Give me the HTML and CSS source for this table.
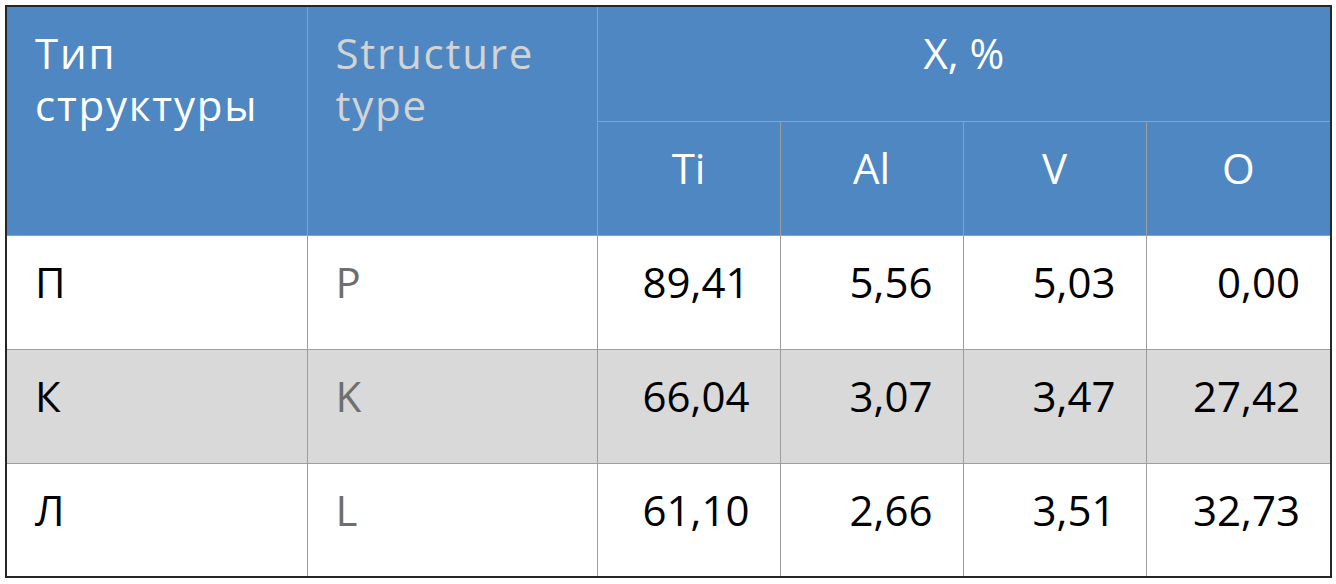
FILE: index.html
```html
<!DOCTYPE html>
<html lang="ru">
<head>
<meta charset="utf-8">
<title>Тип структуры</title>
<link rel="stylesheet" href="styles.css">
</head>
<body>
<table class="data">
  <colgroup>
    <col class="c-ru"><col class="c-en"><col class="c-num"><col class="c-num"><col class="c-num"><col class="c-last">
  </colgroup>
  <thead>
    <tr class="h1">
      <th rowspan="2" class="lbl">Тип<br>структуры</th>
      <th rowspan="2" class="lbl en">Structure<br>type</th>
      <th colspan="4" class="mid">X, %</th>
    </tr>
    <tr class="h2">
      <th class="mid">Ti</th>
      <th class="mid">Al</th>
      <th class="mid">V</th>
      <th class="mid">O</th>
    </tr>
  </thead>
  <tbody>
    <tr>
      <td class="lbl">П</td><td class="lbl en">P</td>
      <td class="num">89,41</td><td class="num">5,56</td><td class="num">5,03</td><td class="num">0,00</td>
    </tr>
    <tr class="alt">
      <td class="lbl">К</td><td class="lbl en">K</td>
      <td class="num">66,04</td><td class="num">3,07</td><td class="num">3,47</td><td class="num">27,42</td>
    </tr>
    <tr>
      <td class="lbl">Л</td><td class="lbl en">L</td>
      <td class="num">61,10</td><td class="num">2,66</td><td class="num">3,51</td><td class="num">32,73</td>
    </tr>
  </tbody>
</table>
</body>
</html>
```
FILE: styles.css
```css
html, body {
  margin: 0;
  padding: 0;
  background: #ffffff;
}

body {
  padding: 5px 0 0 5px;
  font-family: "Open Sans", "Noto Sans", sans-serif;
}

.data {
  border-collapse: collapse;
  table-layout: fixed;
  width: 1325px;
  border: 2px solid #262626;
  font-size: 42px;
  line-height: 52px;
}

.c-ru { width: 301px; }
.c-en { width: 290px; }
.c-num { width: 183px; }
.c-last { width: 185px; }

.data th,
.data td {
  border: 1px solid #9e9e9e;
  padding: 20px 30px 0 28px;
  vertical-align: top;
  font-weight: 400;
  box-sizing: border-box;
}

.data thead th {
  background: #4f87c2;
  color: #ffffff;
}

.h1 th { height: 115px; }
.h2 th { height: 114px; }
.data tbody td { height: 114px; }

.data th.mid {
  text-align: center;
  padding-left: 0;
  padding-right: 0;
}

.data th.lbl {
  text-align: left;
  letter-spacing: 1.8px;
}

.data thead th.en {
  color: #d3d3d3;
}

.data td.lbl {
  text-align: left;
  color: #000000;
}

.data td.en {
  color: #6f6f6f;
}

.data td.num {
  text-align: right;
  color: #000000;
}

.data tr.alt td {
  background: #d9d9d9;
}
```
